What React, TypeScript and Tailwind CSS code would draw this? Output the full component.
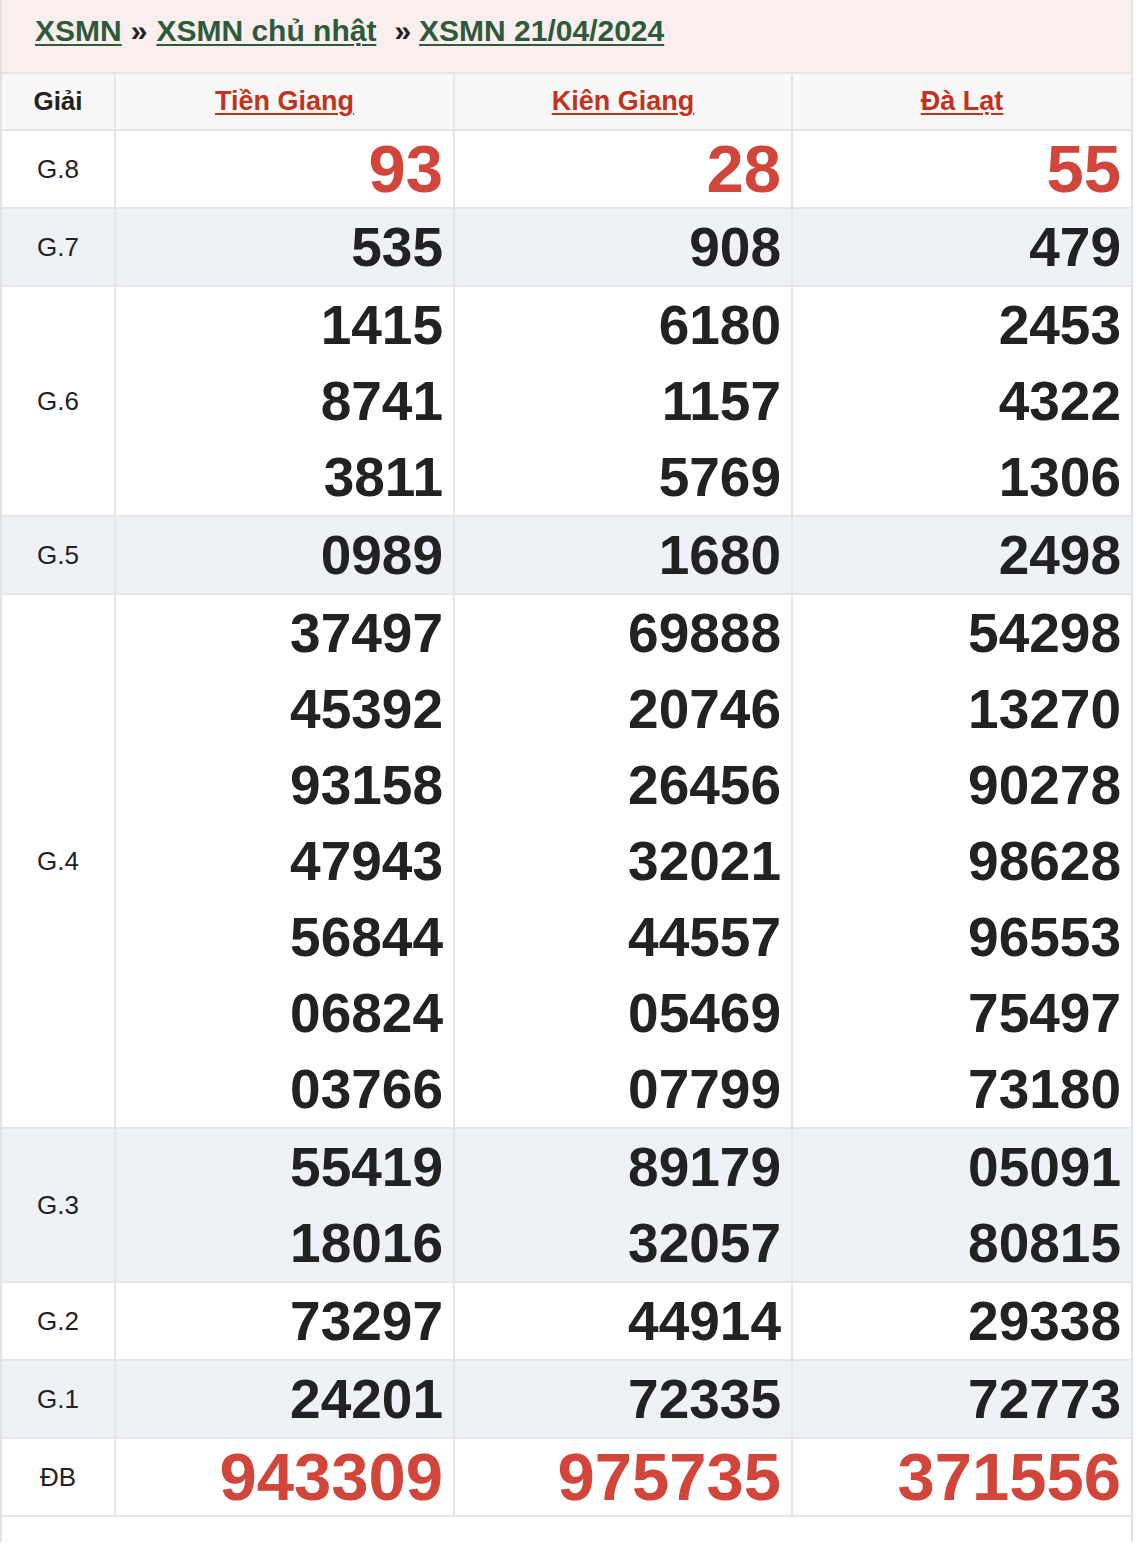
const font = "font-['Liberation_Sans',Arial,sans-serif]";

type Row = { label: string; values: string[][]; alt?: boolean; special?: boolean };

const rows: Row[] = [
  { label: "G.8", values: [["93"], ["28"], ["55"]], special: true },
  { label: "G.7", values: [["535"], ["908"], ["479"]], alt: true },
  {
    label: "G.6",
    values: [
      ["1415", "8741", "3811"],
      ["6180", "1157", "5769"],
      ["2453", "4322", "1306"],
    ],
  },
  { label: "G.5", values: [["0989"], ["1680"], ["2498"]], alt: true },
  {
    label: "G.4",
    values: [
      ["37497", "45392", "93158", "47943", "56844", "06824", "03766"],
      ["69888", "20746", "26456", "32021", "44557", "05469", "07799"],
      ["54298", "13270", "90278", "98628", "96553", "75497", "73180"],
    ],
  },
  {
    label: "G.3",
    values: [
      ["55419", "18016"],
      ["89179", "32057"],
      ["05091", "80815"],
    ],
    alt: true,
  },
  { label: "G.2", values: [["73297"], ["44914"], ["29338"]] },
  { label: "G.1", values: [["24201"], ["72335"], ["72773"]], alt: true },
  { label: "ĐB", values: [["943309"], ["975735"], ["371556"]], special: true },
];

const provinces = ["Tiền Giang", "Kiên Giang", "Đà Lạt"];

export default function App() {
  return (
    <div className={`${font} w-[1133px] border-x-2 border-[#e3e3e3] bg-white pb-[25px] text-[#222]`}>
      <div className="h-[72px] bg-[#fbeeee] pl-[33px] pt-[13px] text-[30px] font-bold leading-[36px]">
        <a href="#" className="text-[#2e5a3c] underline decoration-2 underline-offset-[3px]">
          XSMN
        </a>
        <span className="mx-[9px] text-[#222]">»</span>
        <a href="#" className="text-[#2e5a3c] underline decoration-2 underline-offset-[3px]">
          XSMN chủ nhật
        </a>
        <span className="ml-[18px] mr-[8px] text-[#222]">»</span>
        <a href="#" className="text-[#2e5a3c] underline decoration-2 underline-offset-[3px]">
          XSMN 21/04/2024
        </a>
      </div>

      <table className="w-full table-fixed border-collapse">
        <colgroup>
          <col className="w-[113px]" />
          <col className="w-[339px]" />
          <col className="w-[338px]" />
          <col />
        </colgroup>
        <thead>
          <tr className="h-[57px] bg-[#f8f8f8]">
            <th className="border-t-2 border-[#e6e6e6] text-center text-[26px] font-bold">Giải</th>
            {provinces.map((p) => (
              <th key={p} className="border-l-2 border-t-2 border-[#e6e6e6] text-center text-[27px] font-bold">
                <a href="#" className="text-[#c1331d] underline decoration-2 underline-offset-[3px]">
                  {p}
                </a>
              </th>
            ))}
          </tr>
        </thead>
        <tbody>
          {rows.map((r) => (
            <tr key={r.label} className={r.alt ? "bg-[#eef2f7]" : "bg-white"}>
              <td className="border-b-2 border-t-2 border-[#e6e6e6] text-center text-[26px]">{r.label}</td>
              {r.values.map((vals, i) => (
                <td key={i} className="border-b-2 border-l-2 border-t-2 border-[#e6e6e6] pr-[10px] text-right font-bold">
                  {vals.map((v) => (
                    <div
                      key={v}
                      className={
                        r.special
                          ? "text-[67px] leading-[76px] text-[#d1453a]"
                          : "text-[55px] leading-[76px] text-[#222]"
                      }
                    >
                      {v}
                    </div>
                  ))}
                </td>
              ))}
            </tr>
          ))}
        </tbody>
      </table>
    </div>
  );
}
